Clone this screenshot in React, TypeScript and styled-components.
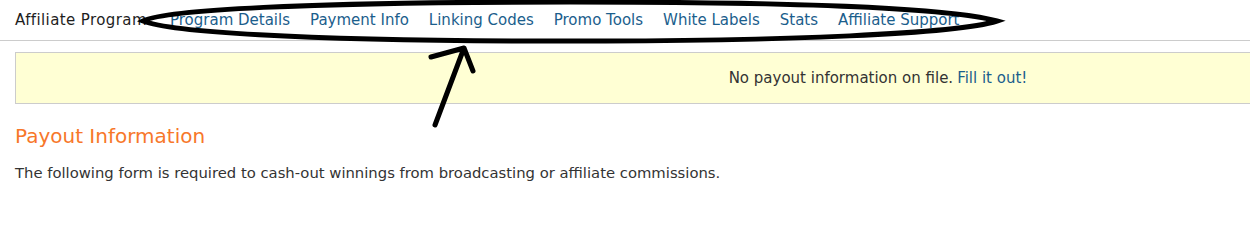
import React from 'react';
import styled, { createGlobalStyle } from 'styled-components';

const GlobalStyle = createGlobalStyle`
    html, body {
        margin: 0;
        padding: 0;
        background: #ffffff;
        overflow: hidden;
    }
    body {
        font-family: "DejaVu Sans", "Liberation Sans", sans-serif;
        font-size: 15px;
        color: #333333;
    }
`;

const Page = styled.div`
    position: relative;
    width: 1250px;
    height: 202px;
    overflow: hidden;
`;

const NavBar = styled.nav`
    display: flex;
    align-items: center;
    gap: 20px;
    height: 41px;
    padding-left: 15px;
    border-bottom: 1px solid #cccccc;
    box-sizing: border-box;
`;

const NavTitle = styled.span`
    color: #1e1e1e;
    letter-spacing: 0.4px;
    margin-right: 3px;
`;

const NavLink = styled.a`
    color: #1b5e8c;
    text-decoration: none;
    white-space: nowrap;
`;

const Content = styled.div`
    padding: 11px 0 0 15px;
`;

const Notice = styled.div`
    display: flex;
    align-items: center;
    justify-content: center;
    width: 1726px;
    height: 52px;
    background: #ffffd4;
    border: 1px solid #cccccc;
    box-sizing: border-box;
`;

const NoticeLink = styled.a`
    color: #1b5e8c;
    margin-left: 4px;
    text-decoration: none;
`;

const Heading = styled.h2`
    margin: 20px 0 0;
    font-size: 20px;
    font-weight: normal;
    line-height: 24px;
    color: #f7772a;
`;

const Text = styled.p`
    margin: 15px 0 0;
    font-size: 14.8px;
    line-height: 20px;
`;

const Annotation = styled.svg`
    position: absolute;
    left: 0;
    top: 0;
    pointer-events: none;
`;

const links = [
    'Program Details',
    'Payment Info',
    'Linking Codes',
    'Promo Tools',
    'White Labels',
    'Stats',
    'Affiliate Support',
];

const App = () => (
    <Page>
        <GlobalStyle />
        <NavBar>
            <NavTitle>Affiliate Program</NavTitle>
            {links.map((name) => (
                <NavLink key={name} href="#">{name}</NavLink>
            ))}
        </NavBar>
        <Content>
            <Notice>
                No payout information on file.
                <NoticeLink href="#">Fill it out!</NoticeLink>
            </Notice>
            <Heading>Payout Information</Heading>
            <Text>
                The following form is required to cash-out winnings from broadcasting or affiliate commissions.
            </Text>
        </Content>
        <Annotation width="1250" height="202" viewBox="0 0 1250 202">
            <path
                d="M143,21 C165,10 300,2 570,2 C800,2 950,8 997,21 C960,33 800,42 520,41 C300,40 170,32 143,21 Z"
                fill="none"
                stroke="#000"
                strokeWidth="5"
            />
            <path
                d="M435,125 L464,48 M431,57 L464,48 L473,71"
                fill="none"
                stroke="#000"
                strokeWidth="5"
                strokeLinecap="round"
                strokeLinejoin="round"
            />
        </Annotation>
    </Page>
);

export default App;
